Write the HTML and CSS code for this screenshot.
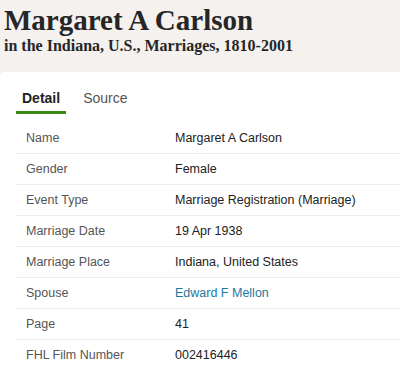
FILE: index.html
```html
<!DOCTYPE html>
<html lang="en">
  <head>
    <meta charset="UTF-8" />
    <title>Margaret A Carlson</title>
    <link rel="stylesheet" href="styles.css">
  </head>
  <body>
    <header class="record-head">
      <h1 class="record-name">Margaret A Carlson</h1>
      <h2 class="record-collection">in the Indiana, U.S., Marriages, 1810-2001</h2>
    </header>

    <section class="panel">
      <nav class="tabs">
        <span class="tab active">Detail</span>
        <span class="tab">Source</span>
      </nav>

      <table class="facts">
        <tr><th>Name</th><td>Margaret A Carlson</td></tr>
        <tr><th>Gender</th><td>Female</td></tr>
        <tr><th>Event Type</th><td>Marriage Registration (Marriage)</td></tr>
        <tr><th>Marriage Date</th><td>19 Apr 1938</td></tr>
        <tr><th>Marriage Place</th><td>Indiana, United States</td></tr>
        <tr><th>Spouse</th><td><a href="#">Edward F Mellon</a></td></tr>
        <tr><th>Page</th><td>41</td></tr>
        <tr><th>FHL Film Number</th><td>002416446</td></tr>
      </table>
    </section>
  </body>
</html>
```

FILE: styles.css
```css
body {
  margin: 0;
  background: #f4f1ee;
  color: #222;
  font-family: "Liberation Sans", Arial, sans-serif;
}
.record-head {
  padding: 4px 4px 0;
  height: 68px;
}
.record-name {
  margin: 0;
  font-family: "Liberation Serif", serif;
  font-size: 29px;
  line-height: 32px;
  font-weight: bold;
  color: #262626;
}
.record-collection {
  margin: 0;
  font-family: "Liberation Serif", serif;
  font-size: 16px;
  line-height: 20px;
  font-weight: bold;
  color: #262626;
}
.panel {
  background: #fff;
  border-top-left-radius: 4px;
  padding: 16px 0 24px 16px;
}
.tabs {
  display: flex;
  gap: 11px;
}
.tab {
  font-size: 14px;
  line-height: 16px;
  color: #555;
  padding: 2px 6px 5px;
  border-bottom: 3px solid transparent;
}
.tab.active {
  color: #222;
  font-weight: bold;
  border-bottom-color: #3b8a0f;
}
.facts {
  width: 100%;
  border-collapse: collapse;
  margin-top: 9px;
  font-size: 12.5px;
  line-height: 14px;
}
.facts tr {
  border-bottom: 1px solid #eeeeee;
}
.facts tr:last-child {
  border-bottom: none;
}
.facts th {
  width: 149px;
  text-align: left;
  font-weight: normal;
  color: #555;
  padding: 8px 0 8px 10px;
  height: 14px;
}
.facts td {
  color: #222;
  padding: 8px 0;
}
.facts a {
  color: #1a7aa0;
  text-decoration: none;
}
```
